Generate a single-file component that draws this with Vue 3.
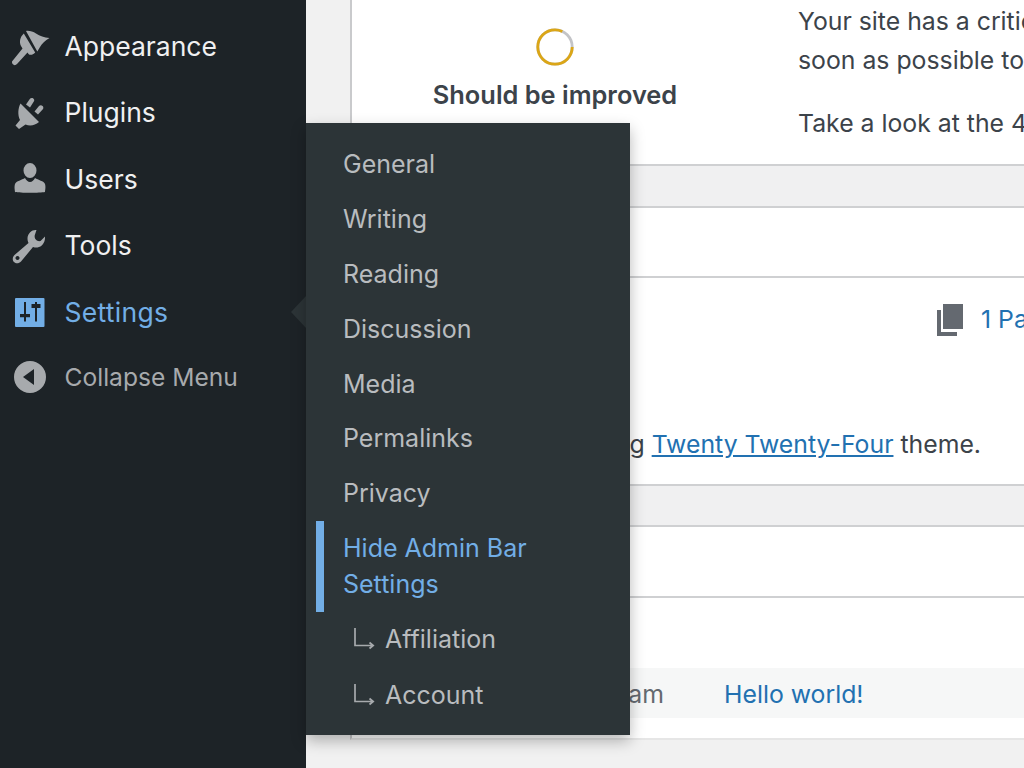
<template>
  <div class="screen">
    <aside class="sidebar">
      <ul class="menu">
        <li v-for="item in menu" :key="item.label" class="menu-item" :class="{ current: item.current, muted: item.muted }">
          <svg class="menu-icon" viewBox="0 0 40 40" aria-hidden="true">
            <path :d="item.icon" fill-rule="evenodd" />
          </svg>
          <span>{{ item.label }}</span>
          <i v-if="item.current" class="pointer"></i>
        </li>
      </ul>
    </aside>

    <main class="content">
      <div class="stack">
        <section class="card health">
          <div class="health-score">
            <svg class="ring" viewBox="0 0 40 40" aria-hidden="true">
              <circle cx="20" cy="20" r="17.2" class="ring-track" />
              <circle cx="20" cy="20" r="17.2" class="ring-value" pathLength="100" stroke-dasharray="82 100" />
            </svg>
            <h2>Should be improved</h2>
          </div>
          <div class="health-text">
            <p>Your site has a critical issue that should be addressed as<br />soon as possible to improve its performance and security.</p>
            <p>Take a look at the 4 items on the Site Health screen.</p>
          </div>
        </section>
        <div class="band"></div>
        <section class="card short"></section>
        <section class="card glance">
          <div class="glance-row">
            <svg class="page-icon" viewBox="0 0 26 32" aria-hidden="true">
              <path d="M6 0h20v25H6z" />
              <path d="M0 6h4v22h16v4H0z" />
            </svg>
            <a>1 Page</a>
          </div>
          <p class="theme-line">WordPress 6.5 running <a class="underlined">Twenty Twenty-Four</a> theme.</p>
        </section>
        <div class="band second"></div>
        <section class="card short tall"></section>
        <section class="activity">
          <div class="activity-row">
            <span class="activity-date">Jan 1st, 9:00 am</span>
            <a>Hello world!</a>
          </div>
        </section>
      </div>
    </main>

    <nav class="flyout">
      <ul>
        <li v-for="link in submenu" :key="link.label" class="flyout-item" :class="{ active: link.active, child: link.child }">
          <svg v-if="link.child" class="elbow" viewBox="0 0 22 22" aria-hidden="true">
            <path d="M1 0v17.5h18M15.5 14.5l3.7 3-3.7 3" />
          </svg>
          <span>{{ link.label }}</span>
        </li>
      </ul>
    </nav>
  </div>
</template>

<script setup>
const menu = [
  {
    label: 'Appearance',
    icon: 'M16 4C19 3.5 23 4.5 26 6.5C30 9 34 10.5 39.5 11C35 13.5 32 16.5 30 20L27.3 24.5ZM13.8 6.5L25.2 25.5C23 28 20 28.5 18.5 27L17.5 25.5L7 37C5 39.5 1.5 37.5 2 34.5L12.5 21.5L11 19C9 15 10 10 13.8 6.5Z'
  },
  {
    label: 'Plugins',
    icon: 'M19.8 6C20.5 4.8 22.2 4.6 23.3 5.4C24.4 6.2 24.5 7.5 23.8 8.6L20 14.5L16 11.5ZM29 13C30 12 31.5 12 32.6 13C33.6 14 33.6 15.5 32.6 16.5L28 21.5L24.5 18.5ZM10.5 10.5L29 29C25 32.5 20 33.5 15.5 31.5L9 36L5.5 32.5L10 27C7.5 22 8 15 10.5 10.5Z'
  },
  {
    label: 'Users',
    icon: 'M20 4a6.5 7.5 0 1 1 0 15 6.5 7.5 0 0 1 0-15zM15 19c1 2 3 4 5 4s4-2 5-4c3 2 9 3 10 6 1 3 0 7 0 8-5 1-25 1-30 0 0-1-1-5 0-8 1-3 7-4 10-6z'
  },
  {
    label: 'Tools',
    icon: 'M26.5 4C22 3.5 18 7 17.5 12C17.5 14 17.8 15.5 18.5 17L4.5 29C2 31.5 2.5 34.5 4 36C6 38 9 37.5 11 35.5L23 21C24.5 21.5 26 21.7 27.5 21.5C32 21 35.5 16 35 10.5L30.5 15C28.5 15.5 26 14.5 25 12.5C24.5 11 24.5 9.5 25 8.5ZM7.5 30a2 2 0 1 0 .01 0z'
  },
  {
    label: 'Settings',
    current: true,
    icon: 'M6 6h27.5a1 1 0 0 1 1 1v27a1 1 0 0 1-1 1H6a1 1 0 0 1-1-1V7a1 1 0 0 1 1-1zM14 10v12h-4v3.3h4v4.2h2v-4.2h4V22h-4V10zM25 10v2h-3.5v4H25v13.5h2V16h3.5v-4H27v-2z'
  },
  {
    label: 'Collapse Menu',
    muted: true,
    icon: 'M20 3a16 16 0 1 1 0 32 16 16 0 0 1 0-32zM24 11L13 19l11 8z'
  }
]

const submenu = [
  { label: 'General' },
  { label: 'Writing' },
  { label: 'Reading' },
  { label: 'Discussion' },
  { label: 'Media' },
  { label: 'Permalinks' },
  { label: 'Privacy' },
  { label: 'Hide Admin Bar Settings', active: true },
  { label: 'Affiliation', child: true },
  { label: 'Account', child: true }
]
</script>

<style>
html,
body {
  margin: 0;
  background: #f1f1f1;
}
</style>

<style scoped>
.screen {
  position: relative;
  display: flex;
  width: 1024px;
  height: 768px;
  overflow: hidden;
  font-family: Inter, "Noto Sans", sans-serif;
  font-size: 24.8px;
  line-height: 39px;
  color: #3c434a;
  background: #f1f1f1;
}

ul {
  list-style: none;
  margin: 0;
  padding: 0;
}

p,
h2 {
  margin: 0;
}

a {
  color: #2271b1;
}

/* sidebar */
.sidebar {
  flex: 0 0 306px;
  background: #1d2327;
}

.menu {
  padding-top: 13.4px;
}

.menu-item {
  position: relative;
  display: flex;
  align-items: center;
  height: 66.4px;
  padding-left: 10px;
  font-size: 26.5px;
  color: #f0f0f1;
}

.menu-icon {
  flex: none;
  width: 40px;
  height: 40px;
  margin-right: 15px;
  fill: #a7aaad;
}

.menu-item span {
  margin-left: -0.5px;
}

.menu-item.current {
  color: #72aee6;
  letter-spacing: 0.3px;
}

.menu-item.current .menu-icon {
  fill: #72aee6;
}

.menu-item.muted {
  height: 65px;
  font-size: 24.6px;
  color: #a7aaad;
}

.pointer {
  position: absolute;
  top: 17px;
  right: 0;
  border: 16px solid transparent;
  border-left: 0;
  border-right: 15px solid #2c3437;
}

/* main column */
.content {
  flex: 1;
  min-width: 0;
  padding-left: 44px;
}

.stack {
  height: 740px;
  background: #fff;
  border-left: 2px solid #c9cacc;
  border-bottom: 2px solid #e6e6e6;
  box-sizing: border-box;
}

.card {
  background: #fff;
  border-bottom: 2px solid #cfd0d2;
  box-sizing: border-box;
}

.band {
  height: 40px;
  background: #f0f0f1;
  border-bottom: 2px solid #cfd0d2;
}

.band.second {
  height: 39px;
}

.short {
  height: 70px;
}

.short.tall {
  height: 71px;
}

.health {
  display: flex;
  height: 166px;
}

.health-score {
  flex: 0 0 406px;
  text-align: center;
}

.ring {
  display: block;
  width: 40px;
  height: 40px;
  margin: 27px auto 0;
}

.ring circle {
  fill: none;
  stroke-width: 2.8;
}

.ring-track {
  stroke: #c3c4c7;
}

.ring-value {
  stroke: #dba617;
}

.health-score h2 {
  margin-top: 8px;
  font-size: 25.4px;
  line-height: 39px;
  font-weight: 600;
}

.health-text {
  flex: none;
  padding: 2px 0 0 40px;
  white-space: nowrap;
}

.health-text p + p {
  margin-top: 24px;
}

.glance {
  height: 208px;
}

.glance-row {
  display: flex;
  align-items: center;
  gap: 18px;
  padding: 22px 0 0 585px;
  white-space: nowrap;
}

.page-icon {
  flex: none;
  width: 26px;
  height: 32px;
  fill: #646970;
}

.theme-line {
  width: 629px;
  margin-top: 86px;
  text-align: right;
  white-space: nowrap;
}

.underlined {
  text-decoration: underline;
}

.activity {
  padding-top: 70px;
}

.activity-row {
  display: flex;
  gap: 60px;
  height: 50px;
  padding-top: 3px;
  box-sizing: border-box;
  align-items: center;
  background: #f6f7f7;
}

.activity-date {
  flex: 0 0 312px;
  text-align: right;
  color: #646970;
  white-space: nowrap;
}

/* flyout submenu */
.flyout {
  position: absolute;
  top: 123px;
  left: 306px;
  width: 324px;
  height: 612px;
  padding: 14px 0 0 10px;
  box-sizing: border-box;
  background: #2c3437;
  box-shadow: 0 6px 14px rgba(0, 0, 0, 0.28);
}

.flyout-item {
  display: flex;
  align-items: center;
  min-height: 54.8px;
  padding-left: 19px;
  padding-right: 60px;
  border-left: 8px solid transparent;
  font-size: 25px;
  line-height: 36px;
  color: #b9bcbf;
}

.flyout-item.active {
  padding-top: 9px;
  padding-bottom: 10px;
  border-left-color: #72aee6;
  color: #72aee6;
}

.flyout-item.child {
  padding-left: 30px;
  min-height: 55.4px;
}

.elbow {
  flex: none;
  width: 22px;
  height: 22px;
  margin-right: 9px;
  fill: none;
  stroke: #a7aaad;
  stroke-width: 1.7;
}
</style>
